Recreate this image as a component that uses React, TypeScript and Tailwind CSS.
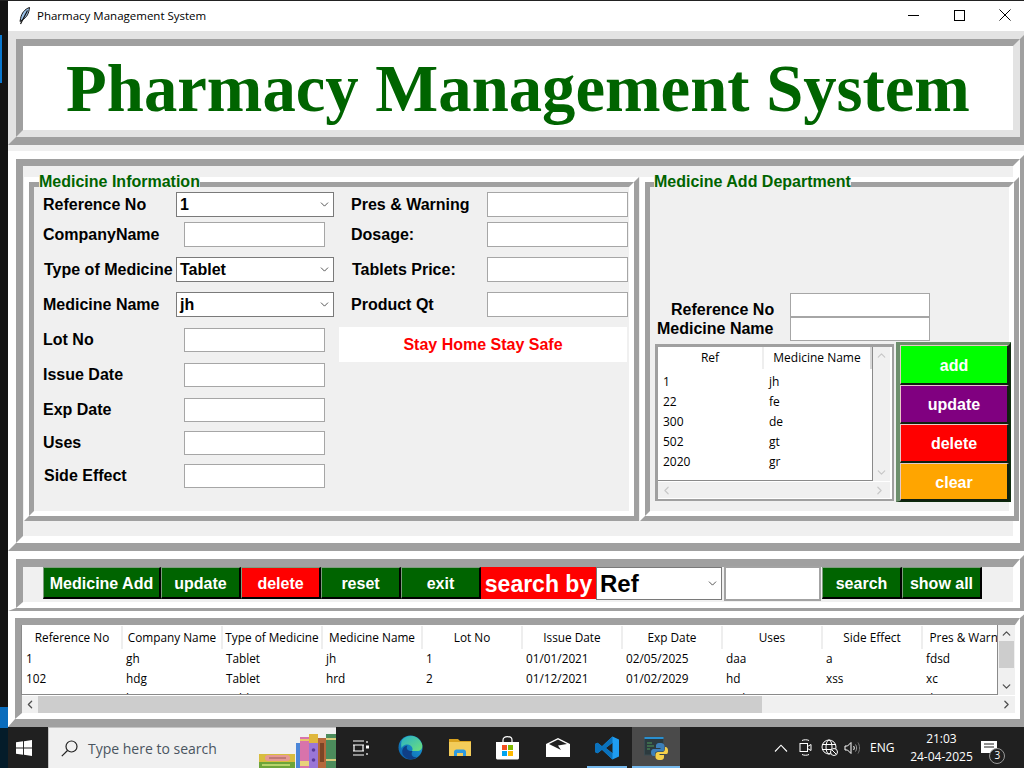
import { ChevronDown, ChevronLeft, ChevronRight, ChevronUp } from "lucide-react";
import type { ReactNode } from "react";

const ariel = "font-['Liberation_Sans',Arial,sans-serif]";
const segoe = "font-['Open_Sans','Noto_Sans',sans-serif]";

const mainCols = ["Reference No", "Company Name", "Type of Medicine", "Medicine Name", "Lot No", "Issue Date", "Exp Date", "Uses", "Side Effect", "Pres & Warning"];
const mainRows = [
  ["1", "gh", "Tablet", "jh", "1", "01/01/2021", "02/05/2025", "daa", "a", "fdsd"],
  ["102", "hdg", "Tablet", "hrd", "2", "01/12/2021", "01/02/2029", "hd", "xss", "xc"],
  ["202", "hjs", "Tablet", "", "21", "01/12/2021", "02/01/2030", "gsd", "", "ds"],
];
const refRows = [["1", "jh"], ["22", "fe"], ["300", "de"], ["502", "gt"], ["2020", "gr"]];

function Label({ children, className = "" }: { children: ReactNode; className?: string }) {
  return <span className={`${ariel} text-[16px] font-bold leading-none text-black whitespace-nowrap ${className}`}>{children}</span>;
}

function Combo({ value, className = "" }: { value: string; className?: string }) {
  return (
    <div className={`flex h-full items-center justify-between border border-[#7a7a7a] bg-white pl-[3px] pr-[2px] ${className}`}>
      <Label>{value}</Label>
      <ChevronDown size={13} strokeWidth={1.4} className="text-[#222]" />
    </div>
  );
}

function Entry({ className = "w-[141px]" }: { className?: string }) {
  return <div className={`h-full border border-[#a6a6a6] bg-white ${className}`} />;
}

function Row({ className = "", children }: { className?: string; children: ReactNode }) {
  return <div className={`flex items-center ${className}`}>{children}</div>;
}

function LabelFrame({ title, titleClass, className = "", children }: { title: string; titleClass: string; className?: string; children: ReactNode }) {
  return (
    <div className={`relative h-[344px] shrink-0 border-[5px] border-t-white border-l-white border-r-[#a0a0a0] border-b-[#a0a0a0] ${className}`}>
      <div className="h-full border-[5px] border-t-[#a0a0a0] border-l-[#a0a0a0] border-r-white border-b-white bg-[#f0f0f0]">
        {children}
      </div>
      <span className={`absolute top-[-8px] bg-[#f0f0f0] ${ariel} text-[16px] font-bold leading-[16px] text-[#006400] whitespace-nowrap ${titleClass}`}>
        {title}
      </span>
    </div>
  );
}

function Btn({ children, className = "" }: { children: ReactNode; className?: string }) {
  return (
    <div className={`flex h-full shrink-0 items-center justify-center border border-t-[#7d9d7d] border-l-[#7d9d7d] border-r-2 border-b-2 border-r-black border-b-black pt-[2px] ${ariel} text-[16px] font-bold text-white ${className}`}>
      {children}
    </div>
  );
}

function SideBtn({ children, className = "" }: { children: ReactNode; className?: string }) {
  return (
    <div className={`flex w-full items-center justify-center border-t border-l border-[#e8c8c8] border-r-2 border-b-2 border-r-[#102010] border-b-[#102010] pt-[2px] ${ariel} text-[16px] font-bold text-white ${className}`}>
      {children}
    </div>
  );
}

function FeatherIcon() {
  return (
    <svg width="12" height="18" viewBox="0 0 12 18" className="shrink-0">
      <path d="M10.5 0.5C6 2 2.5 6 1.6 11.5L1 14.5L3.6 12.6C7.8 10.6 10 6 10.5 0.5Z" fill="#9cc3ea" stroke="#111" strokeWidth="1" />
      <path d="M8.5 3.5L1.5 17" stroke="#111" strokeWidth="1.2" fill="none" />
    </svg>
  );
}

function Books() {
  return (
    <svg width="77" height="36" viewBox="0 0 77 36" className="shrink-0 self-end">
      <rect x="0" y="22" width="36" height="8" fill="#d8bd3e" />
      <rect x="6" y="23" width="25" height="6" rx="3" fill="#e59a93" />
      <rect x="10" y="25" width="17" height="2" fill="#c07a78" />
      <rect x="0" y="30" width="36" height="6" fill="#6da53a" />
      <rect x="3" y="32" width="28" height="2" fill="#b6d36b" />
      <rect x="37" y="11" width="4" height="25" fill="#4c86d8" />
      <rect x="41" y="5" width="9" height="31" fill="#d873ab" />
      <rect x="41" y="7" width="9" height="2" fill="#e8c66a" />
      <rect x="41" y="29" width="9" height="5" fill="#e8d27a" />
      <rect x="50" y="2" width="9" height="34" fill="#9a76d8" />
      <rect x="50" y="2" width="9" height="9" fill="#dfb73d" />
      <circle cx="54.5" cy="18" r="1.8" fill="#5a3a9a" />
      <circle cx="54.5" cy="28" r="1.8" fill="#5a3a9a" />
      <rect x="59" y="6" width="8" height="30" fill="#b5683c" />
      <rect x="61" y="11" width="4" height="19" fill="#7c4526" />
      <rect x="67" y="2" width="10" height="34" fill="#4c8c5c" />
      <rect x="67" y="6" width="10" height="2" fill="#d8cc7c" />
      <rect x="67" y="27" width="10" height="2" fill="#d8cc7c" />
    </svg>
  );
}

function TaskView() {
  return (
    <svg width="18" height="16" viewBox="0 0 18 16" fill="none" stroke="#fff" strokeWidth="1.2">
      <path d="M1 1H12M1 15H12M1 5H12M1 11H12M2 5V11M11 5V11M15 1V3M15 13V15" />
      <rect x="14" y="5.5" width="3" height="3" fill="#fff" stroke="none" />
    </svg>
  );
}

function EdgeIcon() {
  return (
    <svg width="25" height="25" viewBox="0 0 25 25">
      <defs>
        <linearGradient id="edgeA" x1="0" y1="1" x2="1" y2="0">
          <stop offset="0" stopColor="#0a5ea8" />
          <stop offset="1" stopColor="#1fa5dc" />
        </linearGradient>
        <linearGradient id="edgeB" x1="0" y1="0" x2="1" y2="1">
          <stop offset="0" stopColor="#28b0c8" />
          <stop offset="1" stopColor="#6ee07a" />
        </linearGradient>
      </defs>
      <circle cx="12.5" cy="12.5" r="12" fill="url(#edgeA)" />
      <path d="M4 5C9-1 20-1 24 9C25 13 23 16 19 16L14 16C16 12 12 9 8 9.5C6 10 4.500 11 3.500 13C3 10 3 7 4 5Z" fill="url(#edgeB)" />
      <path d="M14.500 16C12 20 15 23 19 22C15 25.500 8 25 5 20C3 16 5 11 9.500 10.500C7.500 14 9.500 16 14.500 16Z" fill="#0f3f86" />
    </svg>
  );
}

function FolderIcon() {
  return (
    <svg width="22" height="19" viewBox="0 0 22 19">
      <path d="M0 1H9L11 3H22V17H0Z" fill="#d9a21f" />
      <rect x="0" y="4" width="22" height="14" fill="#f3cc5a" />
      <path d="M5 18V14C5 12.500 6 11.500 7.500 11.500H14.500C16 11.500 17 12.500 17 14V18H14V15H8V18Z" fill="#2d9ae0" />
    </svg>
  );
}

function StoreIcon() {
  return (
    <svg width="23" height="24" viewBox="0 0 23 24">
      <path d="M7 7V4C7 1.500 9 0.700 11.500 0.700C14 0.700 16 1.500 16 4V7" fill="none" stroke="#fff" strokeWidth="1.200" />
      <path d="M0 6H23V22C23 23 22 23.500 21 23.500H2C1 23.500 0 23 0 22Z" fill="#fff" />
      <rect x="6" y="9" width="5" height="5" fill="#f25022" />
      <rect x="12" y="9" width="5" height="5" fill="#7fba00" />
      <rect x="6" y="15" width="5" height="5" fill="#00a4ef" />
      <rect x="12" y="15" width="5" height="5" fill="#ffb900" />
    </svg>
  );
}

function MailIcon() {
  return (
    <svg width="24" height="20" viewBox="0 0 24 20">
      <path d="M0 6L12 0L24 6V19H0Z" fill="#fff" />
      <path d="M3 6L12 1.500L21 6L12 7.500L15 12Z" fill="#202020" />
    </svg>
  );
}

function VsCodeIcon() {
  return (
    <svg width="24" height="24" viewBox="0 0 24 24">
      <path d="M17.500 0.500L24 3.500V20.500L17.500 23.500L7 13.800L2.500 17.300L0 16V8L2.500 6.700L7 10.200ZM17.500 6.800L10.800 12L17.500 17.200Z" fill="#1f9cf0" />
      <path d="M17.500 0.500L7 10.200L2.500 6.700L0 8V16L2.500 17.300L7 13.800L17.500 23.500V17.200L10.800 12L17.500 6.800Z" fill="#0a72bd" />
    </svg>
  );
}

function PythonIcon() {
  return (
    <svg width="24" height="24" viewBox="0 0 24 24">
      <rect x="0.500" y="1" width="19" height="18" fill="#2c3a3e" stroke="#3a4a50" />
      <rect x="0.500" y="1" width="19" height="2" fill="#2a8fd0" />
      <path d="M3 7H8M3 10H10M3 13H6" stroke="#4e9a58" strokeWidth="1" />
      <path d="M16 7C12.500 7 12 8.500 12 10V12H16.500V13H9.500C8 13 7 14.500 7 16.500C7 18.500 8 20 9.500 20H11V18C11 16.500 12 15.500 13.500 15.500H18C19.500 15.500 20.500 14.500 20.500 13V10C20.500 8.500 19.500 7 16 7Z" fill="#3d7fb8" />
      <path d="M16 24C19.500 24 20 22.500 20 21V19H15.500V18H22.500C24 18 24 16 24 14.500C24 12.500 23 11 21.500 11H21V13C21 14.500 20 16 18.500 16H14C12.500 16 11.500 17 11.500 18.500V21C11.500 22.500 12.500 24 16 24Z" fill="#f5d04a" />
    </svg>
  );
}

function TrayIcons() {
  return (
    <>
      <svg width="14" height="8" viewBox="0 0 14 8" fill="none" stroke="#fff" strokeWidth="1.100" className="ml-[439px]">
        <path d="M1 7.500L7 1.200L13 7.500" />
      </svg>
      <svg width="13" height="17" viewBox="0 0 13 17" fill="none" stroke="#fff" strokeWidth="1" className="ml-[11px]">
        <path d="M3 1.500C5 0.500 8 0.500 10 1.500M3 15.500C5 16.500 8 16.500 10 15.500" />
        <rect x="1" y="4.500" width="7.500" height="8" />
        <path d="M8.500 7.500L12 5.500V11.500L8.500 9.500" />
      </svg>
      <svg width="17" height="17" viewBox="0 0 17 17" fill="none" stroke="#fff" strokeWidth="1" className="ml-[9px]">
        <circle cx="8" cy="8" r="7" />
        <ellipse cx="8" cy="8" rx="3" ry="7" />
        <path d="M1 5.500H15M1 10.500H15" />
        <circle cx="13" cy="13" r="3.500" fill="#202020" />
        <path d="M11 11L15 15" />
      </svg>
      <svg width="17" height="14" viewBox="0 0 17 14" fill="none" stroke="#fff" strokeWidth="1" className="ml-[6px]">
        <path d="M1 5H3.500L7 1.500V12.500L3.500 9H1Z" />
        <path d="M9.500 5C10.500 6 10.500 8 9.500 9" />
        <path d="M11.500 3.500C13 5.500 13 8.500 11.500 10.500" stroke="#9a9a9a" />
        <path d="M14 1.500C16 4.500 16 9.500 14 12.500" stroke="#777" />
      </svg>
    </>
  );
}

export default function App() {
  return (
    <div className="flex h-[768px] w-[1024px] flex-col overflow-hidden bg-[#101418]">
      <div className="h-px w-full shrink-0 bg-[#222]" />
      <div className="flex min-h-0 flex-1">
        {/* desktop sliver left of the window */}
        <div className="flex w-2 shrink-0 flex-col bg-[#131313]">
          <div className="mt-[34px] h-12 w-[2px] bg-[#0a78d0]" />
          <div className="mt-[624px] h-[21px] w-2 bg-[#0a6cbc]" />
          <div className="flex-1 bg-[#041c2a]" />
        </div>

        <div className="flex min-w-0 flex-1 flex-col overflow-hidden bg-[#f0f0f0]">
          {/* title bar */}
          <div className="flex h-[30px] shrink-0 items-center bg-white">
            <div className="ml-[11px]"><FeatherIcon /></div>
            <span className={`ml-[6px] ${segoe} text-[11.5px] text-black`}>Pharmacy Management System</span>
            <div className="ml-auto -mt-[2px] flex items-center">
              <div className="mr-[35px] h-px w-[11px] bg-black" />
              <div className="mr-[34px] h-[11px] w-[11px] border border-black" />
              <svg width="12" height="12" viewBox="0 0 12 12" className="mr-[13px]" stroke="#000" strokeWidth="1">
                <path d="M0.500 0.500L11.500 11.500M11.500 0.500L0.500 11.500" />
              </svg>
            </div>
          </div>

          {/* heading */}
          <div className="h-[114px] w-[1020px] shrink-0 border-8 border-t-[#e3e3e3] border-l-[#e3e3e3] border-r-[#a0a0a0] border-b-[#a0a0a0]">
            <div className="flex h-full items-center justify-center border-[7px] border-t-[#a0a0a0] border-l-[#a0a0a0] border-r-[#e3e3e3] border-b-[#e3e3e3] bg-white pt-[2px]">
              <h1 className="font-['Liberation_Serif','Times_New_Roman',serif] text-[66.7px] font-bold leading-none text-[#006400] whitespace-nowrap">
                Pharmacy Management System
              </h1>
            </div>
          </div>

          {/* form area */}
          <div className="mt-[6px] h-[400px] w-[1020px] shrink-0 border-8 border-t-white border-l-white border-r-[#a0a0a0] border-b-[#a0a0a0]">
            <div className="flex h-full items-start border-[7px] border-t-[#a0a0a0] border-l-[#a0a0a0] border-r-white border-b-white bg-[#f0f0f0] pl-px pt-[11px]">
              <LabelFrame title="Medicine Information" titleClass="left-[10px]" className="w-[615px]">
                <div className="flex pl-[9px] pt-[5px]">
                  <div className="flex w-[296px] shrink-0 flex-col">
                    <Row className="h-[25px]"><Label className="w-[133px]">Reference No</Label><Combo value="1" className="w-[158px]" /></Row>
                    <Row className="mt-[5px] h-[25px]"><Label className="w-[141px]">CompanyName</Label><Entry /></Row>
                    <Row className="mt-[10px] h-[25px]"><Label className="w-[133px] pl-px">Type of Medicine</Label><Combo value="Tablet" className="w-[158px]" /></Row>
                    <Row className="mt-[10px] h-[25px]"><Label className="w-[133px]">Medicine Name</Label><Combo value="jh" className="w-[158px]" /></Row>
                    <Row className="mt-[11px] h-[24px]"><Label className="w-[141px]">Lot No</Label><Entry /></Row>
                    <Row className="mt-[11px] h-[24px]"><Label className="w-[141px]">Issue Date</Label><Entry /></Row>
                    <Row className="mt-[11px] h-[24px]"><Label className="w-[141px]">Exp Date</Label><Entry /></Row>
                    <Row className="mt-[9px] h-[24px]"><Label className="w-[141px]">Uses</Label><Entry /></Row>
                    <Row className="mt-[9px] h-[24px]"><Label className="w-[141px] pl-px">Side Effect</Label><Entry /></Row>
                  </div>
                  <div className="flex w-[289px] shrink-0 flex-col">
                    <Row className="h-[25px]"><Label className="w-[148px] pl-[12px]">Pres &amp; Warning</Label><Entry /></Row>
                    <Row className="mt-[5px] h-[25px]"><Label className="w-[148px] pl-[12px]">Dosage:</Label><Entry /></Row>
                    <Row className="mt-[10px] h-[25px]"><Label className="w-[148px] pl-[13px]">Tablets Price:</Label><Entry /></Row>
                    <Row className="mt-[10px] h-[25px]"><Label className="w-[148px] pl-[12px]">Product Qt</Label><Entry /></Row>
                    <div className={`mt-[10px] flex h-[35px] w-[288px] items-center justify-center bg-white ${ariel} text-[16px] font-bold text-[#ff0000]`}>
                      Stay Home Stay Safe
                    </div>
                  </div>
                </div>
              </LabelFrame>

              <LabelFrame title="Medicine Add Department" titleClass="left-[9px]" className="ml-px w-[379px]">
                <div className="flex flex-col">
                  <div className="mt-[106px] flex h-[48px] items-start">
                    <div className="flex w-[139px] shrink-0 flex-col pt-[7px]">
                      <div className="flex h-[19px] items-center pl-[21px]"><Label>Reference No</Label></div>
                      <div className="flex h-[19px] items-center pl-[7px]"><Label>Medicine Name</Label></div>
                    </div>
                    <div className="ml-px flex h-[48px] flex-col">
                      <div className="h-[24px]"><Entry className="w-[140px]" /></div>
                      <div className="h-[24px]"><Entry className="w-[140px]" /></div>
                    </div>
                  </div>

                  <div className="mt-px flex items-start">
                    {/* small reference list */}
                    <div className="ml-[5px] mt-[2px] h-[157px] w-[239px] shrink-0 border-[3px] border-r-2 border-b-2 border-[#a0a0a0]">
                      <div className="h-full border-r-2 border-b border-white">
                        <div className="flex h-[134px]">
                          <div className={`w-[215px] shrink-0 border-r border-b border-[#8a8a8a] bg-white ${segoe} text-[12px] text-black`}>
                            <div className="flex h-[25px] pb-[3px]">
                              <div className="flex w-[106px] items-center justify-center border-r-2 border-[#eeeeee]">Ref</div>
                              <div className="flex w-[108px] items-center justify-center border-r-2 border-[#d8d8d8]">Medicine Name</div>
                            </div>
                            {refRows.map((r) => (
                              <div key={r[0]} className="flex h-[20px] items-center">
                                <span className="w-[111px] pl-[5px]">{r[0]}</span>
                                <span>{r[1]}</span>
                              </div>
                            ))}
                          </div>
                          <div className="flex w-[17px] flex-col items-center justify-between bg-[#f0f0f0] py-[2px]">
                            <ChevronUp size={13} strokeWidth={2.2} className="text-[#c8c8c8]" />
                            <ChevronDown size={13} strokeWidth={2.2} className="text-[#c8c8c8]" />
                          </div>
                        </div>
                        <div className="flex h-[17px] items-center justify-between border-t border-white bg-[#f0f0f0] px-[2px]">
                          <ChevronLeft size={13} strokeWidth={2.2} className="text-[#c8c8c8]" />
                          <ChevronRight size={13} strokeWidth={2.2} className="mr-[2px] text-[#c8c8c8]" />
                        </div>
                      </div>
                    </div>

                    {/* coloured action buttons */}
                    <div className="ml-[2px] flex h-[160px] w-[115px] shrink-0 flex-col border-t-[3px] border-l-4 border-r-2 border-b border-t-[#6d8f6d] border-l-[#6d8f6d] border-r-[#0c2a0c] border-b-[#0c2a0c]">
                      <SideBtn className="h-[40px] bg-[#00ff00]">add</SideBtn>
                      <SideBtn className="h-[39px] bg-[#800080]">update</SideBtn>
                      <SideBtn className="h-[39px] bg-[#ff0000]">delete</SideBtn>
                      <SideBtn className="h-[38px] bg-[#ffa500]">clear</SideBtn>
                    </div>
                  </div>
                </div>
              </LabelFrame>
            </div>
          </div>

          {/* toolbar */}
          <div className="h-[60px] w-[1020px] shrink-0 border-8 border-b-[3px] border-t-white border-l-white border-r-[#a0a0a0] border-b-[#a0a0a0]">
            <div className="flex h-full items-start border-[7px] border-t-8 border-b-[6px] border-t-[#a0a0a0] border-l-[#a0a0a0] border-r-white border-b-white bg-[#f0f0f0] pl-[20px]">
              <div className="flex h-[32px] items-stretch">
                <Btn className="w-[118px] bg-[#006400]">Medicine Add</Btn>
                <Btn className="w-[80px] bg-[#006400]">update</Btn>
                <Btn className="w-[80px] bg-[#ff0000]">delete</Btn>
                <Btn className="w-[80px] bg-[#006400]">reset</Btn>
                <Btn className="w-[80px] bg-[#006400]">exit</Btn>
                <div className={`flex w-[115px] shrink-0 items-center justify-center bg-[#ff0000] pt-[3px] ${ariel} text-[23px] font-bold text-white`}>search by</div>
                <div className={`flex h-[33px] w-[126px] shrink-0 items-center justify-between border border-[#7a7a7a] bg-white pl-[3px] pr-[2px] ${ariel} text-[24px] font-bold text-black`}>
                  <span className="pt-px">Ref</span>
                  <ChevronDown size={13} strokeWidth={1.4} className="text-[#222]" />
                </div>
                <div className="ml-[2px] -mt-px h-[35px] w-[97px] shrink-0 border-2 border-[#a3a3a3] bg-white" />
                <Btn className="ml-px w-[80px] bg-[#006400]">search</Btn>
                <Btn className="w-[80px] bg-[#006400]">show all</Btn>
              </div>
            </div>
          </div>

          {/* records table */}
          <div className="h-[116px] w-[1020px] shrink-0 border-[7px] border-b-8 border-r-8 border-t-white border-l-white border-r-[#a0a0a0] border-b-[#a0a0a0]">
            <div className="h-full border-[7px] border-b-[6px] border-r-[5px] border-t-[#a0a0a0] border-l-[#a0a0a0] border-r-white border-b-white bg-[#f0f0f0]">
              <div className="flex h-[70px]">
                <div className={`-ml-px w-[977px] shrink-0 overflow-hidden border-l border-r border-b border-[#8a8a8a] bg-white ${segoe} text-[11.8px] text-black`}>
                  <div className="ml-px flex h-[24px] w-[1000px] pt-px">
                    {mainCols.map((c) => (
                      <div key={c} className="flex w-[100px] shrink-0 items-center justify-center border-r-2 border-[#eeeeee] whitespace-nowrap">{c}</div>
                    ))}
                  </div>
                  {mainRows.map((row) => (
                    <div key={row[0]} className="flex h-[20px] w-[1000px] items-center">
                      {row.map((v, i) => (
                        <span key={i} className="w-[100px] shrink-0 pl-[4px]">{v}</span>
                      ))}
                    </div>
                  ))}
                </div>
                <div className="flex w-[17px] shrink-0 flex-col items-center justify-between bg-[#f0f0f0] py-[2px]">
                  <ChevronUp size={13} strokeWidth={2.4} className="text-[#505050]" />
                  <div className="mb-auto mt-px h-[27px] w-[15px] bg-[#cdcdcd]" />
                  <ChevronDown size={13} strokeWidth={2.4} className="text-[#505050]" />
                </div>
              </div>
              <div className="flex h-[18px] items-center border-t border-white bg-[#f0f0f0]">
                <ChevronLeft size={13} strokeWidth={2.4} className="w-[16px] shrink-0 text-[#505050]" />
                <div className="h-full w-[724px] bg-[#cdcdcd]" />
                <ChevronRight size={13} strokeWidth={2.4} className="ml-auto mr-[2px] text-[#505050]" />
              </div>
            </div>
          </div>

          {/* windows taskbar */}
          <div className="flex h-[41px] shrink-0 items-center bg-[#202020]">
            <div className="flex h-full w-[40px] shrink-0 items-center justify-start pl-[8px]">
              <svg width="16" height="16" viewBox="0 0 17 17" fill="#fff">
                <path d="M0 2.500L7.500 1.400V8H0ZM8.500 1.300L17 0V8H8.500ZM0 9H7.500V15.600L0 14.500ZM8.500 9H17V17L8.500 15.700Z" />
              </svg>
            </div>
            <div className="flex h-full w-[288px] shrink-0 items-center border-t border-l border-[#c4c4c4] bg-[#f0f0f0] pl-[12px]">
              <svg width="17" height="17" viewBox="0 0 17 17" fill="none" stroke="#222" strokeWidth="1.200" className="shrink-0">
                <circle cx="10.500" cy="6.500" r="5.500" />
                <path d="M6.500 10.500L0.800 16.200" />
              </svg>
              <span className={`ml-[10px] ${segoe} text-[14px] text-[#4a5560] whitespace-nowrap`}>Type here to search</span>
              <div className="ml-auto flex self-end"><Books /></div>
            </div>
            <div className="ml-[16px] flex w-[18px] shrink-0 justify-center"><TaskView /></div>
            <div className="ml-[28px] shrink-0"><EdgeIcon /></div>
            <div className="ml-[26px] shrink-0"><FolderIcon /></div>
            <div className="ml-[25px] shrink-0"><StoreIcon /></div>
            <div className="ml-[27px] shrink-0"><MailIcon /></div>
            <div className="relative ml-[17px] flex h-full w-[40px] shrink-0 items-center justify-center">
              <VsCodeIcon />
              <div className="absolute bottom-0 left-0 h-[2px] w-full bg-[#76b9ed]" />
            </div>
            <div className="relative ml-[5px] flex h-full w-[48px] shrink-0 items-center justify-center bg-[#4a4a4a]">
              <PythonIcon />
              <div className="absolute bottom-0 left-0 h-[2px] w-full bg-[#76b9ed]" />
            </div>
            <div className="flex min-w-0 flex-1 items-center">
              <div className="flex items-center -ml-[345px]"><TrayIcons /></div>
              <span className={`ml-[9px] ${segoe} text-[12px] text-white`}>ENG</span>
              <div className={`ml-[17px] flex w-[60px] flex-col items-center ${segoe} text-[12px] leading-[18px] text-white`}>
                <span>21:03</span>
                <span className="whitespace-nowrap">24-04-2025</span>
              </div>
              <div className="relative ml-[10px] h-[24px] w-[24px]">
                <svg width="16" height="13" viewBox="0 0 16 13" className="absolute left-0 top-[5px]">
                  <path d="M0 0H16V12H0Z" fill="#fff" />
                  <path d="M3 3H13M3 6H13" stroke="#202020" />
                </svg>
                <div className={`absolute left-[8px] top-[12px] flex h-[16px] w-[16px] items-center justify-center rounded-full border border-[#999] bg-[#202020] ${segoe} text-[10px] text-white`}>3</div>
              </div>
            </div>
          </div>
        </div>
      </div>
    </div>
  );
}
